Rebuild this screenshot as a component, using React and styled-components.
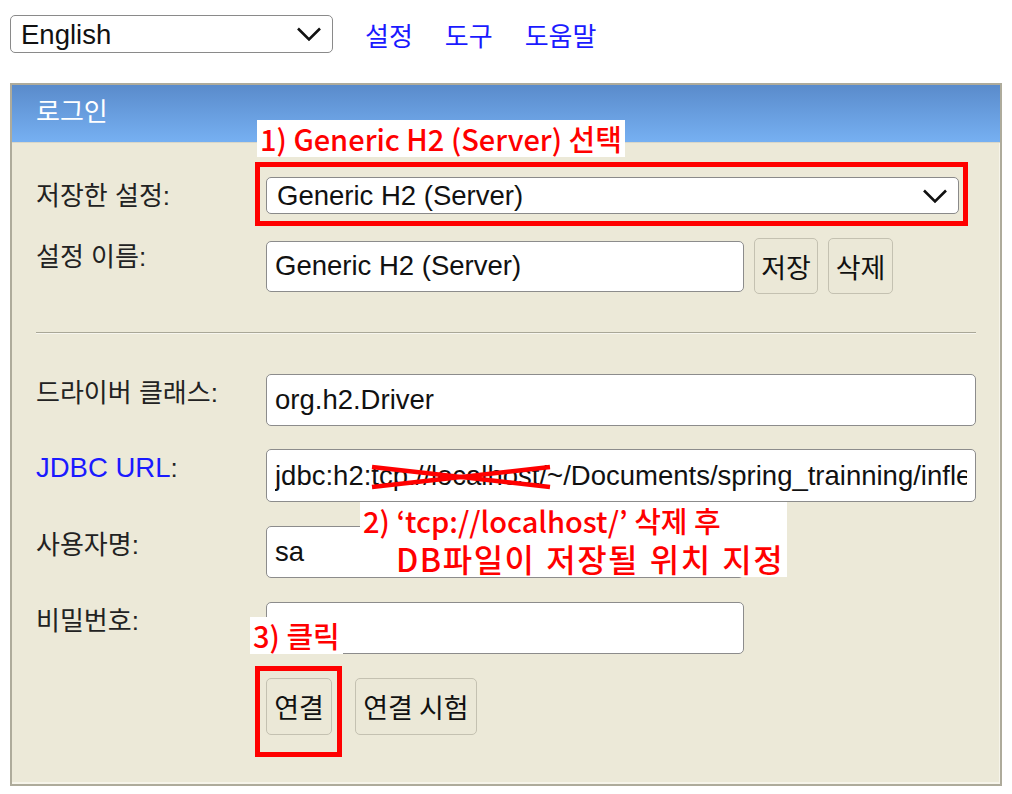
import styled, { createGlobalStyle } from 'styled-components';

const GlobalStyle = createGlobalStyle`
  html, body {
    margin: 0;
    padding: 0;
    background: #fff;
  }
  body {
    font-family: 'Liberation Sans', 'Noto Sans CJK KR', sans-serif;
  }
`;

function Chevron() {
  return (
    <ChevronIcon width='26' height='15' viewBox='0 0 26 15'>
      <polyline points='2,2 13,13 24,2' fill='none' stroke='#111' strokeWidth='2.6' />
    </ChevronIcon>
  );
}

export default function App() {
  return (
    <>
      <GlobalStyle />
      <TopBar>
        <SelectWrap $width={323} $height={38}>
          <Select defaultValue='en'>
            <option value='en'>English</option>
          </Select>
          <Chevron />
        </SelectWrap>
        <NavLink href='#'>설정</NavLink>
        <NavLink href='#'>도구</NavLink>
        <NavLink href='#'>도움말</NavLink>
      </TopBar>

      <Panel>
        <Header>로그인</Header>
        <Body>
          <Row>
            <Label>저장한 설정:</Label>
            <Anchor>
              <SelectWrap $width={693} $height={37}>
                <Select defaultValue='gs'>
                  <option value='gs'>Generic H2 (Server)</option>
                </Select>
                <Chevron />
              </SelectWrap>
              <Note $left={-9} $top={-57}>1) Generic H2 (Server) 선택</Note>
              <Frame $t={-15} $l={-11} $r={-9} $b={-12} />
            </Anchor>
          </Row>

          <Row $gap={24}>
            <Label>설정 이름:</Label>
            <Inline $gap={10}>
              <Input $width={478} $height={51} defaultValue='Generic H2 (Server)' />
              <Button $width={64} $height={56}>저장</Button>
              <Button $width={65} $height={56}>삭제</Button>
            </Inline>
          </Row>

          <Divider />

          <Row>
            <Label>드라이버 클래스:</Label>
            <Input defaultValue='org.h2.Driver' />
          </Row>

          <Row $gap={23}>
            <Label>
              <Latin>JDBC URL</Latin>:
            </Label>
            <Anchor>
              <Input
                $height={53}
                defaultValue='jdbc:h2:tcp://localhost/~/Documents/spring_trainning/inflearn/test'
              />
              <Cross width='182' height='26' viewBox='0 0 182 26'>
                <line x1='2' y1='3' x2='180' y2='23' stroke='#ff0000' strokeWidth='4.5' />
                <line x1='2' y1='23' x2='180' y2='3' stroke='#ff0000' strokeWidth='4.5' />
              </Cross>
              <Note $left={94} $top={53}>
                <div>2) ‘tcp://localhost/’ 삭제 후</div>
                <NoteIndent>DB파일이 저장될 위치 지정</NoteIndent>
              </Note>
            </Anchor>
          </Row>

          <Row $gap={24}>
            <Label>사용자명:</Label>
            <Input $width={478} defaultValue='sa' />
          </Row>

          <Row $gap={24}>
            <Label>비밀번호:</Label>
            <Anchor>
              <Input $width={478} type='password' defaultValue='' />
              <Note $left={-16} $top={15}>3) 클릭</Note>
            </Anchor>
          </Row>

          <Row $gap={24}>
            <span />
            <Inline $gap={23}>
              <Anchor>
                <Button $width={66} $height={57}>연결</Button>
                <Frame $t={-12} $l={-11} $r={-10} $b={-22} />
              </Anchor>
              <Button $width={122} $height={57}>연결 시험</Button>
            </Inline>
          </Row>
        </Body>
      </Panel>
    </>
  );
}

const TopBar = styled.div`
  display: flex;
  align-items: center;
  gap: 32px;
  padding: 15px 0 0 10px;
`;

const NavLink = styled.a`
  font-size: 26px;
  color: #1a1aff;
  text-decoration: none;
`;

const SelectWrap = styled.div`
  position: relative;
  width: ${(p) => p.$width}px;
  height: ${(p) => p.$height}px;
`;

const Select = styled.select`
  appearance: none;
  box-sizing: border-box;
  width: 100%;
  height: 100%;
  margin: 0;
  padding: 0 40px 0 10px;
  background: #fff;
  border: 1.5px solid #8a8a8a;
  border-radius: 5px;
  font-family: 'Liberation Sans', sans-serif;
  font-size: 27.5px;
  color: #111;
`;

const ChevronIcon = styled.svg`
  position: absolute;
  right: 11px;
  top: 50%;
  transform: translateY(-50%);
  pointer-events: none;
`;

const Panel = styled.div`
  box-sizing: border-box;
  width: 992px;
  height: 703px;
  margin: 30px 0 0 10px;
  background: #ece9d8;
  border: 2px solid #aeab9b;
  box-shadow: inset -1px -2px 0 #f6f4ea;
`;

const Header = styled.div`
  height: 57px;
  line-height: 55px;
  padding-left: 24px;
  background: linear-gradient(#5a8bcb, #76b0f2);
  border-bottom: 1px solid #d9d7c9;
  color: #fff;
  font-size: 26px;
`;

const Body = styled.div`
  display: flex;
  flex-direction: column;
  padding: 34px 24px 0 24px;
`;

const Row = styled.div`
  display: grid;
  grid-template-columns: 230px 1fr;
  align-items: start;
  margin-top: ${(p) => p.$gap || 0}px;
`;

const Label = styled.div`
  padding-top: 4px;
  font-size: 26px;
  line-height: 30px;
  color: #222;
`;

const Latin = styled.span`
  font-size: 27.5px;
  color: #1a1aff;
`;

const Anchor = styled.div`
  position: relative;
  width: fit-content;
`;

const Inline = styled.div`
  display: flex;
  align-items: center;
  gap: ${(p) => p.$gap}px;
`;

const Input = styled.input`
  box-sizing: border-box;
  display: block;
  width: ${(p) => (p.$width ? `${p.$width}px` : '710px')};
  height: ${(p) => p.$height || 52}px;
  margin: 0;
  padding: 0 8px;
  background: #fff;
  border: 1.5px solid #8c8c8c;
  border-radius: 5px;
  font-family: 'Liberation Sans', sans-serif;
  font-size: 27.5px;
  color: #111;
  outline: none;
`;

const Button = styled.button`
  box-sizing: border-box;
  width: ${(p) => p.$width}px;
  height: ${(p) => p.$height}px;
  padding: 0;
  background: #ebe8d7;
  border: 1.5px solid #c4c1b1;
  border-radius: 5px;
  font-family: 'Noto Sans CJK KR', sans-serif;
  font-size: 27px;
  color: #111;
`;

const Divider = styled.div`
  margin: 38px 0 40px;
  border-top: 1px solid #a9a797;
  border-bottom: 1px solid #f7f6ef;
`;

const Note = styled.div`
  position: absolute;
  left: ${(p) => p.$left}px;
  top: ${(p) => p.$top}px;
  z-index: 2;
  padding: 0 3px;
  background: #fff;
  white-space: nowrap;
  font-family: 'Noto Sans CJK KR', sans-serif;
  font-weight: 500;
  font-size: 29px;
  line-height: 37px;
  color: #ff0000;
`;

const NoteIndent = styled.div`
  padding-left: 33px;
  font-size: 32px;
  line-height: 38px;
  letter-spacing: 1.5px;
  word-spacing: 2px;
`;

const Frame = styled.div`
  position: absolute;
  top: ${(p) => p.$t}px;
  left: ${(p) => p.$l}px;
  right: ${(p) => p.$r}px;
  bottom: ${(p) => p.$b}px;
  border: 5px solid #ff0000;
  pointer-events: none;
  z-index: 2;
`;

const Cross = styled.svg`
  position: absolute;
  left: 104px;
  top: 15px;
  pointer-events: none;
`;
